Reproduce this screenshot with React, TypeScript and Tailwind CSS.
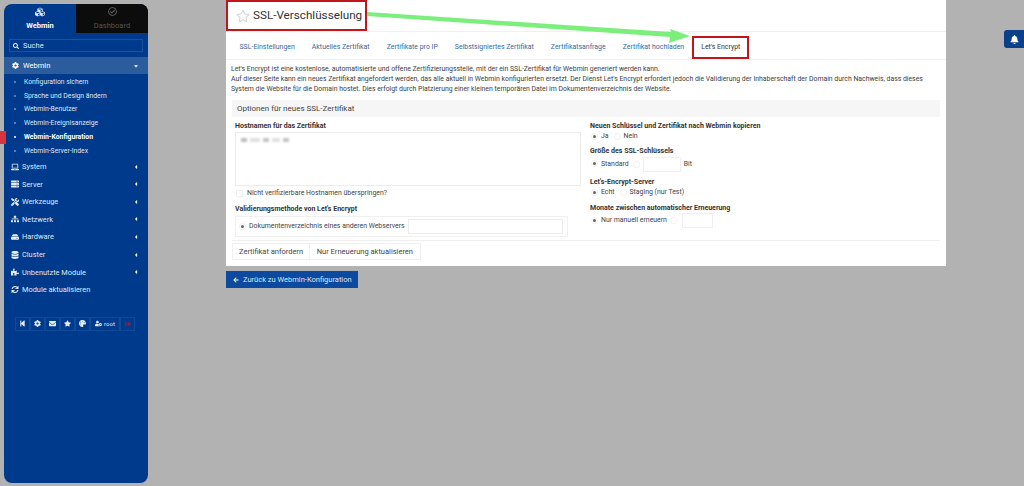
import { FaArrowLeft, FaBell, FaCaretDown, FaCaretLeft, FaCog, FaCubes, FaDatabase, FaEnvelope, FaHdd, FaLaptop, FaPalette, FaPuzzlePiece, FaRegCheckCircle, FaRegStar, FaSearch, FaServer, FaSignOutAlt, FaSitemap, FaStar, FaStepBackward, FaSync, FaTools, FaUserCog } from "react-icons/fa";

const subItems = [
  "Konfiguration sichern",
  "Sprache und Design ändern",
  "Webmin-Benutzer",
  "Webmin-Ereignisanzeige",
  "Webmin-Konfiguration",
  "Webmin-Server-Index",
];

const menuItems = [
  { label: "System", icon: FaLaptop },
  { label: "Server", icon: FaServer },
  { label: "Werkzeuge", icon: FaTools },
  { label: "Netzwerk", icon: FaSitemap },
  { label: "Hardware", icon: FaHdd },
  { label: "Cluster", icon: FaDatabase },
  { label: "Unbenutzte Module", icon: FaPuzzlePiece },
];

const tabs = [
  "SSL-Einstellungen",
  "Aktuelles Zertifikat",
  "Zertifikate pro IP",
  "Selbstsigniertes Zertifikat",
  "Zertifikatsanfrage",
  "Zertifikat hochladen",
];

function Radio({ label, on }: { label: string; on?: boolean }) {
  return (
    <span className="flex items-center gap-[3px] whitespace-nowrap">
      <span className="flex h-[7px] w-[7px] items-center justify-center rounded-full border border-[#f0f0f0]">
        {on && <span className="h-[3px] w-[3px] rounded-full bg-[#666]" />}
      </span>
      {label}
    </span>
  );
}

function Sidebar() {
  return (
    <aside className="flex h-[479px] w-[144px] flex-col overflow-hidden rounded-[8px] bg-[#003a8c] text-[#dfe8f5]">
      <div className="flex h-[29px] shrink-0">
        <div className="flex w-[72px] flex-col items-center pt-[3px] text-[7.5px] font-bold text-white">
          <FaCubes className="h-[10px] w-[10px] text-[#dfe8f5]" />
          <span className="mt-[3px]">Webmin</span>
        </div>
        <div className="flex w-[72px] flex-col items-center bg-[#0c0c0c] pt-[3px] text-[7.5px] text-[#555]">
          <FaRegCheckCircle className="h-[9px] w-[9px] text-[#666]" />
          <span className="mt-[4px]">Dashboard</span>
        </div>
      </div>

      <div className="mx-[5px] mt-[6px] flex h-[13px] shrink-0 items-center gap-[4px] border border-[#1d5199] pl-[3px] text-[7.5px] text-[#dfe8f5]">
        <FaSearch className="h-[6px] w-[6px] text-white" />
        Suche
      </div>

      <div className="mt-[5px] flex h-[17px] shrink-0 items-center bg-[#2b5c9b] pl-[8px] pr-[9px] text-[7.5px] text-white">
        <FaCog className="mr-[4px] h-[7px] w-[7px]" />
        <span className="flex-1">Webmin</span>
        <FaCaretDown className="h-[6px] w-[6px]" />
      </div>

      <ul className="flex shrink-0 flex-col pt-[1px] text-[6.8px]">
        {subItems.map((item) => {
          const active = item === "Webmin-Konfiguration";
          return (
            <li key={item} className={`flex h-[13.8px] items-center pl-[9.5px] ${active ? "font-bold text-white" : ""}`}>
              <span className={`mr-[8.5px] h-[2px] w-[2px] rounded-full ${active ? "bg-white" : "bg-[#6f96c8]"}`} />
              {item}
            </li>
          );
        })}
      </ul>

      <ul className="flex shrink-0 flex-col text-[7.4px]">
        {menuItems.map(({ label, icon: Icon }) => (
          <li key={label} className="flex h-[17.6px] items-center pl-[7px] pr-[9px]">
            <Icon className="mr-[3px] h-[8px] w-[8px] text-[#e6edf7]" />
            <span className="flex-1">{label}</span>
            <FaCaretLeft className="h-[6px] w-[6px] text-white" />
          </li>
        ))}
        <li className="flex h-[17.6px] items-center pl-[7px]">
          <FaSync className="mr-[3px] h-[7px] w-[8px] text-[#e6edf7]" />
          Module aktualisieren
        </li>
      </ul>

      <div className="ml-[11px] mt-[18px] flex h-[14px] shrink-0 text-[6px] text-[#dfe8f5]">
        {[FaStepBackward, FaCog, FaEnvelope, FaStar, FaPalette].map((Icon, i) => (
          <span key={i} className="flex w-[15px] items-center justify-center border border-[#0f4a9b]">
            <Icon className="h-[7px] w-[7px] text-[#e6edf7]" />
          </span>
        ))}
        <span className="flex w-[30px] items-center justify-center gap-[2px] border border-[#0f4a9b]">
          <FaUserCog className="h-[7px] w-[7px] text-[#e6edf7]" />
          root
        </span>
        <span className="flex w-[15px] items-center justify-center border border-[#0f4a9b]">
          <FaSignOutAlt className="h-[6px] w-[6px] text-[#8c2346]" />
        </span>
      </div>
    </aside>
  );
}

function Content() {
  return (
    <main className="ml-[78px] w-[720px] shrink-0">
      <div className="h-[266px] bg-white text-[6.9px] text-[#444]">
        <div className="h-[32px] border-b border-[#f0f0f0]">
          <h1 className="flex h-[31px] w-[141px] items-center whitespace-nowrap border-2 border-[#c3161c] pl-[8px] text-[11.7px] text-[#333]">
            <FaRegStar className="mr-[3px] h-[14px] w-[14px] shrink-0 text-[#d8d8d8]" />
            SSL-Verschlüsselung
          </h1>
        </div>

        <nav className="flex h-[28px] items-start border-b border-[#f2f2f2] pl-[5px] pt-[4px] text-[6.94px]">
          {tabs.map((tab) => (
            <span key={tab} className="flex h-[23px] items-center px-[8.5px] text-[#35689b]">
              {tab}
            </span>
          ))}
          <span className="ml-[-0.5px] flex h-[23px] items-center border-2 border-[#c3161c] px-[7px] text-[#333]">
            Let's Encrypt
          </span>
        </nav>

        <p className="pl-[5px] pt-[4px] text-[6.88px] leading-[10px] text-[#3c3c3c]">
          Let's Encrypt ist eine kostenlose, automatisierte und offene Zertifizierungsstelle, mit der ein SSL-Zertifikat für Webmin generiert werden kann.
          <br />
          Auf dieser Seite kann ein neues Zertifikat angefordert werden, das alle aktuell in Webmin konfigurierten ersetzt. Der Dienst Let's Encrypt erfordert jedoch die Validierung der Inhaberschaft der Domain durch Nachweis, dass dieses
          <br />
          System die Website für die Domain hostet. Dies erfolgt durch Platzierung einer kleinen temporären Datei im Dokumentenverzeichnis der Website.
        </p>

        <section className="ml-[6px] mt-[6px] w-[708px] border-b border-[#efefef]">
          <div className="flex h-[17px] items-center bg-[#f6f6f6] pl-[5px] text-[8px] text-[#444]">
            Optionen für neues SSL-Zertifikat
          </div>
          <div className="flex h-[123px]">
            <div className="w-[352px] pl-[3px] pt-[5px]">
              <div className="text-[7px] font-bold leading-[9px] text-[#333]">Hostnamen für das Zertifikat</div>
              <div className="mt-[1px] flex h-[54px] w-[346px] gap-[3px] border border-[#ececec] pl-[5px] pt-[5px]">
                <span className="h-[4px] w-[6px] bg-[#bdbdbd] blur-[1px]" />
                <span className="h-[4px] w-[10px] bg-[#e0e0e0] blur-[1px]" />
                <span className="h-[4px] w-[6px] bg-[#c4c4c4] blur-[1px]" />
                <span className="h-[4px] w-[8px] bg-[#e0e0e0] blur-[1px]" />
                <span className="h-[4px] w-[6px] bg-[#c4c4c4] blur-[1px]" />
              </div>
              <div className="mt-[2.5px] flex items-center gap-[4px] pl-[1px] leading-[9px]">
                <span className="h-[7px] w-[7px] rounded-[1px] border border-[#efefef]" />
                Nicht verifizierbare Hostnamen überspringen?
              </div>
              <div className="mt-[7px] text-[7px] font-bold leading-[9px] text-[#333]">Validierungsmethode von Let's Encrypt</div>
              <div className="mt-[2.5px] flex h-[21px] w-[333px] items-center border border-[#f0f0f0] pl-[3px]">
                <Radio label="Dokumentenverzeichnis eines anderen Webservers" on />
                <span className="ml-[3px] h-[15px] w-[155px] border border-[#ececec]" />
              </div>
            </div>
            <div className="flex-1 pl-[6px] pt-[5px]">
              <div className="text-[7px] font-bold leading-[9px] text-[#333]">Neuen Schlüssel und Zertifikat nach Webmin kopieren</div>
              <div className="flex h-[11px] items-center gap-[5px] pl-[1px]">
                <Radio label="Ja" on />
                <Radio label="Nein" />
              </div>
              <div className="mt-[5px] text-[7px] font-bold leading-[9px] text-[#333]">Größe des SSL-Schlüssels</div>
              <div className="flex h-[16px] items-center gap-[2px] pl-[1px]">
                <Radio label="Standard" on />
                <span className="ml-[2px] h-[7px] w-[7px] rounded-full border border-[#f0f0f0]" />
                <span className="mx-[1px] h-[15px] w-[38px] border border-[#f0f0f0]" />
                Bit
              </div>
              <div className="mt-[6px] text-[7px] font-bold leading-[9px] text-[#333]">Let's-Encrypt-Server</div>
              <div className="flex h-[10px] items-center gap-[5px] pl-[1px]">
                <Radio label="Echt" on />
                <Radio label="Staging (nur Test)" />
              </div>
              <div className="mt-[7px] text-[7px] font-bold leading-[9px] text-[#333]">Monate zwischen automatischer Erneuerung</div>
              <div className="flex h-[15px] items-center gap-[3px] pl-[1px]">
                <Radio label="Nur manuell erneuern" on />
                <span className="h-[7px] w-[7px] rounded-full border border-[#f0f0f0]" />
                <span className="ml-[2px] h-[15px] w-[31px] border border-[#f0f0f0]" />
              </div>
            </div>
          </div>
        </section>

        <div className="ml-[6px] mt-[2px] flex h-[17px] w-fit items-center border border-[#f0f0f0] text-[7.5px] text-[#444]">
          <span className="border-r border-[#f0f0f0] px-[6px] leading-[15px]">Zertifikat anfordern</span>
          <span className="px-[6.5px] leading-[15px]">Nur Erneuerung aktualisieren</span>
        </div>
      </div>

      <div className="mt-[5px] flex h-[17px] w-[132px] items-center bg-[#0b4a9e] pl-[7px] text-[7.5px] text-[#dbe6f5]">
        <FaArrowLeft className="mr-[4px] h-[6px] w-[6px] text-white" />
        Zurück zu Webmin-Konfiguration
      </div>
    </main>
  );
}

export default function App() {
  return (
    <div className="relative flex h-[486px] w-[1024px] overflow-hidden bg-[#b2b2b2] pl-[4px] pt-[4px] font-['Roboto',sans-serif]">
      <Sidebar />
      <div className="-mt-[4px]">
        <Content />
      </div>

      {/* marker next to the active menu entry */}
      <span className="absolute left-0 top-[131px] h-[13px] w-[6px] bg-[#d8343f]" />

      {/* green arrow drawn over the screenshot */}
      <svg className="absolute left-[360px] top-[8px]" width="340" height="40" viewBox="0 0 340 40">
        <polygon points="7,4 311,24 310,21 330,28 309,35 310,29 7,8" fill="#7cee7c" />
      </svg>

      <div className="absolute right-0 top-[30px] flex h-[18px] w-[20px] items-center justify-center rounded-l-[3px] bg-[#0b3f8a]">
        <FaBell className="h-[9px] w-[9px] text-white" />
      </div>
    </div>
  );
}
